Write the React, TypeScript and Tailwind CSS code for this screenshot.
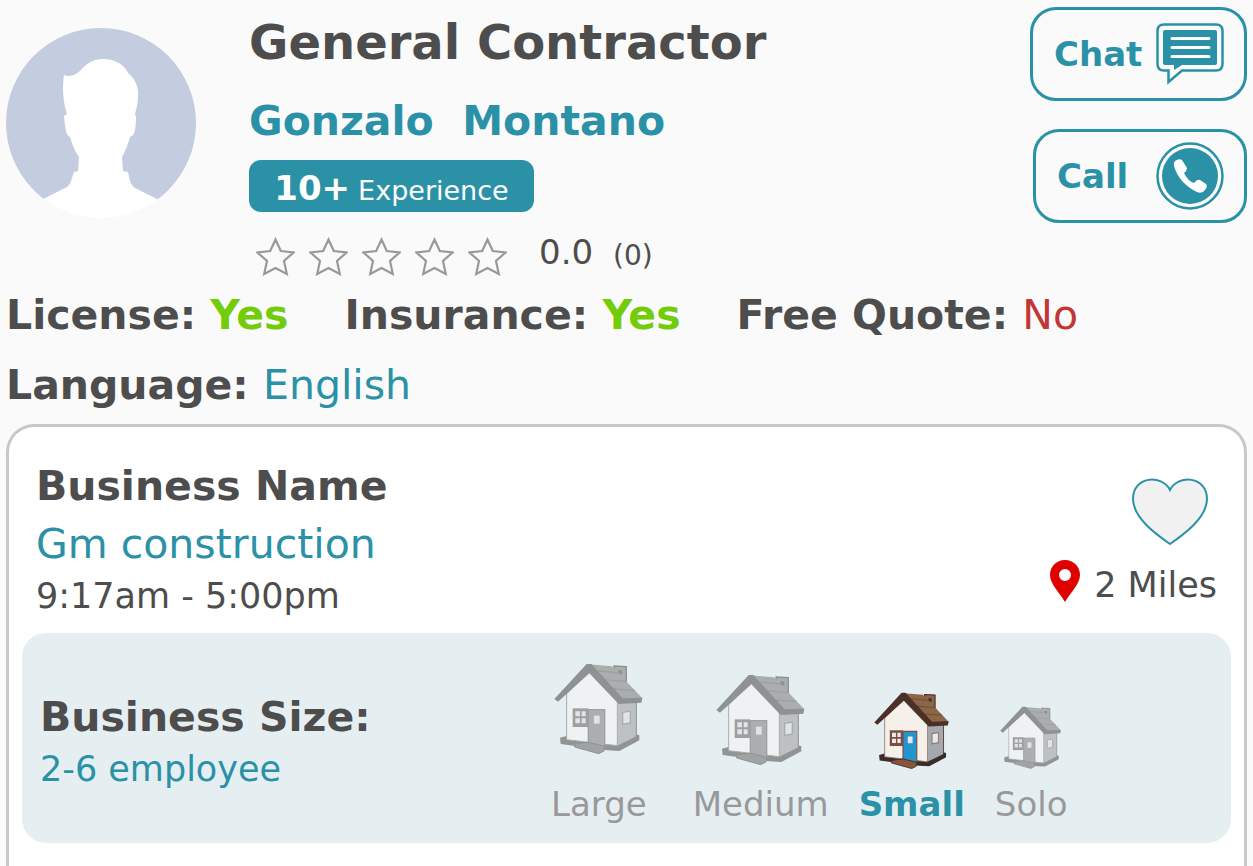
import { useState } from 'react';
import { clsx } from 'clsx';

const houseColors = {
  color: {
    roof: '#8b6748',
    roofLine: '#6f4f36',
    edge: '#4b3028',
    wall: '#f6f0ea',
    side: '#a4a8af',
    line: '#8d7a72',
    frame: '#7a4d3c',
    door: '#2494cf',
    base: '#3d2b29',
    step: '#8a543a',
    glass: '#ebe9ee',
  },
  gray: {
    roof: '#abaeae',
    roofLine: '#9da0a0',
    edge: '#8f9292',
    wall: '#eff2f3',
    side: '#bdc1c2',
    line: '#a9acad',
    frame: '#9da0a1',
    door: '#abafb0',
    base: '#919494',
    step: '#a0a3a3',
    glass: '#e0e4e5',
  },
};

const sizes = [
  { label: 'Large', house: 'w-[90px]', wrap: 'pb-[15px]', item: 'mr-4' },
  { label: 'Medium', house: 'w-[90px]', wrap: 'pb-1' },
  { label: 'Small', house: 'w-[76px]', wrap: 'pb-0', active: true },
  { label: 'Solo', house: 'w-[62px]', wrap: 'pb-0' },
];

function House({ active, className }: { active?: boolean; className?: string }) {
  const c = active ? houseColors.color : houseColors.gray;
  return (
    <svg viewBox="0 0 270 276" className={className} aria-hidden="true">
      {/* base */}
      <path d="M18 224 L40 218 L190 238 L247 214 L256 217 V232 L196 264 L160 262 L20 243 Z" fill={c.base} />
      {/* walls */}
      <path d="M190 112 L247 108 V220 L190 248 Z" fill={c.side} />
      <path d="M105 24 L38 92 V230 L190 248 V112 Z" fill={c.wall} stroke={c.line} strokeWidth="3" />
      <path d="M247 108 V220" stroke={c.edge} strokeWidth="3" />
      {/* chimney */}
      <path d="M180 9 L217 11 V56 L180 34 Z" fill={c.roof} stroke={c.edge} strokeWidth="4" />
      <path d="M193 22 h12 v12 h-12 Z" fill={c.edge} />
      {/* roof */}
      <path d="M105 4 L174 10 L265 106 L262 116 L200 118 Z" fill={c.roof} />
      <path d="M132 24 L196 30 M152 50 L218 56 M174 78 L242 82" stroke={c.roofLine} strokeWidth="4" fill="none" />
      <path d="M98 3 L112 3 L206 106 L265 104 L262 119 L194 123 L106 31 L12 116 L1 108 Z" fill={c.edge} />
      {/* window */}
      <path d="M56 136 h47 v56 h-47 Z" fill={c.frame} />
      <path d="M64 145 h14 v15 h-14 Z M83 145 h12 v15 h-12 Z M64 166 h14 v15 h-14 Z M83 166 h12 v15 h-12 Z" fill={c.glass} />
      {/* door */}
      <path d="M103 140 H152 V250 L103 240 Z" fill={c.door} stroke={c.frame} strokeWidth="4" />
      <path d="M120 158 h17 v24 h-17 Z" fill={c.glass} />
      {/* side window */}
      <path d="M206 148 L229 144 V180 L206 184 Z" fill={c.glass} stroke={c.line} strokeWidth="4" />
      {/* step */}
      <path d="M62 243 L104 238 L152 250 L150 264 L134 272 L62 252 Z" fill={c.step} stroke={c.base} strokeWidth="3" />
    </svg>
  );
}

function Avatar() {
  return (
    <svg viewBox="0 0 190 190" className="w-[190px] shrink-0" role="img" aria-label="Profile photo">
      <clipPath id="avatar-clip">
        <circle cx="95" cy="95" r="95" />
      </clipPath>
      <g clipPath="url(#avatar-clip)">
        <rect width="190" height="171" fill="#c3cddf" />
        <path
          d="M0 171 H37 L57 161 Q64 158 65 153 L68 144 L72 143 L73 129 C68 122 66 115 64 109 C60 108 59 99 58 88 L61 86 C57 74 56 60 58 47 Q66 50 74 43 C80 36 86 31 97 31 C109 31 119 37 122 45 C130 51 133 61 132 69 C132 76 130 81 129 86 L130 89 C130 97 129 105 127 107 L124 109 C122 116 120 122 116 129 L117 143 L122 144 L124 153 Q125 158 131 161 L151 171 H190 V190 H0 Z"
          fill="#fff"
        />
      </g>
    </svg>
  );
}

function ChatIcon() {
  return (
    <svg viewBox="0 0 68 62" className="w-[68px]" aria-hidden="true">
      <path d="M8 1.500 H60 Q66.500 1.500 66.500 8 V41 Q66.500 47.500 60 47.500 H26 L12.500 59 V47.500 H8 Q1.500 47.500 1.500 41 V8 Q1.500 1.500 8 1.500 Z" fill="#fafafa" stroke="#2a91a7" strokeWidth="2.500" />
      <path d="M9 7 H59 Q61 7 61 9 V40 Q61 42 59 42 H26 L18 47 V42 H9 Q7 42 7 40 V9 Q7 7 9 7 Z" fill="#2a91a7" />
      <path d="M16 15.500 H53 M16 24.500 H53 M16 33.500 H53" stroke="#fff" strokeWidth="3" strokeLinecap="round" />
    </svg>
  );
}

function CallIcon() {
  return (
    <svg viewBox="0 0 68 68" className="w-[68px]" aria-hidden="true">
      <circle cx="34" cy="34" r="32.500" fill="#fafafa" stroke="#2a91a7" strokeWidth="2.500" />
      <circle cx="34" cy="34" r="28" fill="#2a91a7" />
      <path d="M19 19 Q23 16 26 18 L31 26 Q31 29 28 31 Q32 39 38 41 Q41 37 44 38 L50 42 Q52 44 49 48 Q46 52 41 50 Q34 47 27 40 Q20 32 18 24 Q17 21 19 19 Z" fill="#fff" />
    </svg>
  );
}

function Star() {
  return (
    <svg viewBox="0 0 39 39" className="w-[39px]" aria-hidden="true">
      <path d="M19.500 2.500 L24.800 14 L37.500 15.500 L28 24 L30.800 37 L19.500 31 L8.200 37 L11 24 L1.500 15.500 L14.200 14 Z" fill="none" stroke="#999" strokeWidth="2.200" />
    </svg>
  );
}

export default function App() {
  const [liked, setLiked] = useState(false);

  return (
    <div className="min-h-screen bg-[#fafafa] px-[6px] font-['Verdana','DejaVu_Sans',sans-serif] text-[#4d4d4d]">
      {/* Header */}
      <header className="flex items-start pt-[7px]">
        <div className="pt-[21px]">
          <Avatar />
        </div>
        <div className="ml-[53px] flex-1">
          <h1 className="text-[48px] leading-[70px] font-bold">General Contractor</h1>
          <h2 className="mt-4 text-[41px] leading-[56px] font-bold whitespace-pre text-[#2a91a7]">Gonzalo  Montano</h2>
          <div className="mt-[11px] flex h-[52px] w-[285px] items-baseline justify-center gap-2 rounded-xl bg-[#2a91a7] text-white">
            <span className="text-[34px] leading-[56px] font-bold">10+</span>
            <span className="text-[27px]">Experience</span>
          </div>
          <div className="flex h-[68px] items-center pt-5 pl-[7px]">
            <div className="flex gap-[14px]" role="img" aria-label="0 out of 5 stars">
              {[1, 2, 3, 4, 5].map((n) => (
                <Star key={n} />
              ))}
            </div>
            <span className="ml-8 pb-2 text-[34px] leading-[46px]">0.0</span>
            <span className="ml-5 text-[28px] leading-[46px]">(0)</span>
          </div>
        </div>
        <div className="flex flex-col items-end gap-7">
          <button className="flex h-[94px] w-[217px] items-center justify-between rounded-[26px] border-3 border-[#2a91a7] pr-5 pl-[21px] text-[34px] font-bold text-[#2a91a7]">
            Chat
            <ChatIcon />
          </button>
          <button className="flex h-[94px] w-[214px] items-center justify-between rounded-[26px] border-3 border-[#2a91a7] pr-5 pl-[21px] text-[34px] font-bold text-[#2a91a7]">
            Call
            <CallIcon />
          </button>
        </div>
      </header>

      {/* Credentials */}
      <div className="flex gap-14 text-[41px] leading-[70px] font-bold whitespace-nowrap">
        <p>
          License: <span className="text-[#72cc0a]">Yes</span>
        </p>
        <p>
          Insurance: <span className="text-[#72cc0a]">Yes</span>
        </p>
        <p>
          Free Quote: <span className="font-normal text-[#c23636]">No</span>
        </p>
      </div>
      <p className="text-[41px] leading-[70px] font-bold">
        Language: <span className="font-normal text-[#2a91a7]">English</span>
      </p>

      {/* Business card */}
      <section className="mt-1 rounded-t-[28px] border-3 border-b-0 border-[#c8c8c8] bg-white px-[13px] pt-[30px]">
        <div className="flex justify-between px-[14px]">
          <div>
            <h3 className="text-[41px] leading-[58px] font-bold">Business Name</h3>
            <p className="text-[41px] leading-[58px] text-[#2a91a7]">Gm construction</p>
            <p className="text-[35px] leading-[46px]">9:17am - 5:00pm</p>
          </div>
          <div className="flex flex-col items-end pt-[21px]">
            <button className="mr-2" aria-label="Save" aria-pressed={liked} onClick={() => setLiked(!liked)}>
              <svg viewBox="0 0 78 68" className="w-[78px]">
                <path d="M39 66 C26 57 2 40 2 21 C2 -2 31 -4 39 12 C47 -4 76 -2 76 21 C76 40 52 57 39 66 Z" fill={liked ? '#2a91a7' : '#f1f1f1'} stroke="#2a91a7" strokeWidth="2" />
              </svg>
            </button>
            <p className="mt-2 flex items-center gap-[14px] text-[35px] leading-[46px]">
              <svg viewBox="0 0 30 42" className="w-[30px]" aria-hidden="true">
                <path d="M15 0 C6 0 0 7 0 15 C0 24 10 33 15 42 C20 33 30 24 30 15 C30 7 24 0 15 0 Z M15 9 A6 6 0 1 1 15 21 A6 6 0 1 1 15 9 Z" fill="#e00000" fillRule="evenodd" />
              </svg>
              <span className="pt-2">2 Miles</span>
            </p>
          </div>
        </div>

        {/* Business size */}
        <div className="mt-[14px] flex h-[210px] items-center rounded-[24px] bg-[#e5eff2] pl-[18px]">
          <div className="w-[511px] pt-1">
            <h3 className="text-[41px] leading-[58px] font-bold">Business Size:</h3>
            <p className="text-[35px] leading-[46px] text-[#2a91a7]">2-6 employee</p>
          </div>
          <ul className="flex items-end gap-[30px] pt-6">
            {sizes.map((size) => (
              <li key={size.label} className={clsx('flex flex-col items-center', size.item)}>
                <div className={size.wrap}>
                  <House active={size.active} className={size.house} />
                </div>
                <span className={clsx('text-[34px] leading-[68px]', size.active ? 'font-bold text-[#2a91a7]' : 'text-[#999]')}>
                  {size.label}
                </span>
              </li>
            ))}
          </ul>
        </div>
      </section>
      <div className="h-6 border-x-3 border-[#c8c8c8] bg-white" />
    </div>
  );
}
